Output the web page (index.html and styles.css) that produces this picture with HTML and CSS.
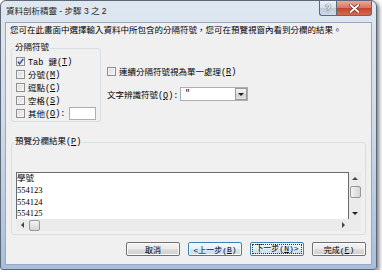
FILE: index.html
```html
<!DOCTYPE html>
<html lang="zh-Hant">
<head>
    <meta charset="UTF-8">
    <title>資料剖析精靈 - 步驟 3 之 2</title>
    <link rel="stylesheet" href="styles.css">
</head>
<body>
    <div class="window">
        <div class="titlebar">
            <span class="title">資料剖析精靈 - 步驟 3 之 2</span>
            <div class="caption">
                <span class="cbtn help">?</span>
                <span class="cbtn close">
                    <svg width="11" height="9" viewBox="0 0 11 9">
                        <path d="M1.5 1 L9.5 8 M9.5 1 L1.5 8" stroke="#6b2a1f" stroke-width="3.2" stroke-linecap="round"/>
                        <path d="M1.5 1 L9.5 8 M9.5 1 L1.5 8" stroke="#fff" stroke-width="1.8" stroke-linecap="round"/>
                    </svg>
                </span>
            </div>
        </div>

        <div class="client">
            <p class="intro">您可在此畫面中選擇輸入資料中所包含的分隔符號，您可在預覽視窗內看到分欄的結果。</p>

            <div class="options">
                <!-- 分隔符號 -->
                <fieldset class="group delims">
                    <legend>分隔符號</legend>
                    <label class="check">
                        <span class="box">
                            <svg width="7" height="7" viewBox="0 0 7 7"><path d="M0.8 3.8 L2.6 5.8 L6.3 0.8" fill="none" stroke="#2c4fa0" stroke-width="1.4"/></svg>
                        </span>Tab 鍵(<u>T</u>)
                    </label>
                    <label class="check"><span class="box"></span>分號(<u>M</u>)</label>
                    <label class="check"><span class="box"></span>逗點(<u>C</u>)</label>
                    <label class="check"><span class="box"></span>空格(<u>S</u>)</label>
                    <label class="check"><span class="box"></span>其他(<u>O</u>):<span class="textbox"></span></label>
                </fieldset>

                <div class="side">
                    <label class="check"><span class="box"></span>連續分隔符號視為單一處理(<u>R</u>)</label>
                    <div class="qualifier">
                        <span class="lbl">文字辨識符號(<u>Q</u>):</span>
                        <div class="select">
                            <span class="value">"</span>
                            <span class="drop"><i class="tri down"></i></span>
                        </div>
                    </div>
                </div>
            </div>

            <!-- 預覽 -->
            <fieldset class="group preview">
                <legend>預覽分欄結果(<u>P</u>)</legend>
                <div class="previewbox">
                    <div class="data">學號<br>554123<br>554124<br>554125</div>
                    <div class="vscroll">
                        <span class="sbtn"><i class="tri up"></i></span>
                        <span class="thumb v"></span>
                        <span class="sbtn end"><i class="tri down"></i></span>
                    </div>
                    <div class="hscroll">
                        <span class="sbtn"><i class="tri left"></i></span>
                        <span class="thumb h"></span>
                        <span class="sbtn end"><i class="tri right"></i></span>
                    </div>
                    <div class="corner"></div>
                </div>
            </fieldset>

            <div class="buttons">
                <span class="btn">取消</span>
                <span class="btn default">&lt;上一步(<u>B</u>)</span>
                <span class="btn default focus"><span class="focusrect">下一步(<u>N</u>)&gt;</span></span>
                <span class="btn">完成(<u>F</u>)</span>
            </div>
        </div>
    </div>
</body>
</html>
```

FILE: styles.css
```css
* {
    box-sizing: border-box;
}
body {
    margin: 0;
    background: #fff;
    font-family: "Liberation Mono", "Noto Sans CJK TC", monospace;
    font-size: 8.5px;
    color: #000;
}
u {
    text-underline-offset: 1px;
}
.window {
    width: 377px;
    height: 270px;
    border: 1px solid #5d6878;
    border-radius: 6px 6px 3px 3px;
    padding: 0 4px 4px;
    background: linear-gradient(#dfe7f0, #cfdbe9 45%, #a8bfdc);
    box-shadow: 2px 2px 4px rgba(0,0,0,0.55);
}
.titlebar {
    height: 21px;
    display: flex;
    justify-content: space-between;
    align-items: flex-start;
}
.title {
    font-family: "Liberation Sans", "Noto Sans CJK TC", sans-serif;
    line-height: 21px;
    padding-left: 1px;
    color: #1b1b1b;
}
.caption {
    display: flex;
}
.cbtn {
    height: 15px;
    border: 1px solid #5c6a7e;
    border-top: none;
    display: flex;
    align-items: center;
    justify-content: center;
}
.help {
    width: 17px;
    border-right: none;
    border-radius: 0 0 0 3px;
    background: linear-gradient(#eef2f7, #d5deea 50%, #bccbdd 51%, #cfdbe9);
    font-family: "Liberation Sans", sans-serif;
    font-size: 10px;
    font-weight: bold;
    color: #f4f6f9;
    text-shadow: 0 0 1px #4a5566, 0 0 1px #4a5566;
}
.close {
    width: 36px;
    border-radius: 0 0 3px 0;
    background: linear-gradient(#e9a99b, #d7735f 50%, #c2452d 51%, #d66a4e);
}
.client {
    height: 243px;
    border: 1px solid #98a9bf;
    background: #f0f0f0;
    padding: 3px 5px 0;
}
.intro {
    margin: 0 0 0 -1px;
    line-height: 10px;
    white-space: nowrap;
}
.options {
    display: flex;
    gap: 6px;
    margin-top: 7px;
}
.group {
    margin: 0;
    min-width: 0;
    border: 1px solid #d5dfe5;
    border-radius: 3px;
    padding: 2px 0 1px 2px;
}
.group legend {
    padding: 0 1px;
    line-height: 10px;
}
.delims {
    width: 90px;
}
.check {
    display: flex;
    align-items: center;
    height: 13px;
    padding-left: 2px;
    white-space: nowrap;
}
.box {
    width: 9px;
    height: 9px;
    margin-right: 3px;
    border: 1px solid #8e8f8f;
    background: linear-gradient(135deg, #d9d9d9, #f7f7f7);
    box-shadow: inset 0 0 0 1px #f3f3f3;
    display: flex;
    align-items: center;
    justify-content: center;
    flex-shrink: 0;
}
.textbox {
    width: 27px;
    height: 13px;
    margin-left: 4px;
    border: 1px solid #abadb3;
    background: #fff;
}
.side {
    padding-top: 22px;
}
.side .check {
    padding-left: 0;
}
.qualifier {
    display: flex;
    align-items: center;
    margin-top: 9px;
}
.qualifier .lbl {
    width: 73px;
}
.select {
    width: 68px;
    height: 14px;
    border: 1px solid #abadb3;
    background: #fff;
    display: flex;
}
.select .value {
    flex: 1;
    padding-left: 4px;
    line-height: 12px;
}
.drop {
    width: 12px;
    border: 1px solid #9a9a9a;
    background: linear-gradient(#f4f4f4, #e2e2e2 50%, #d2d2d2 51%, #e0e0e0);
    display: flex;
    align-items: center;
    justify-content: center;
}
.tri {
    width: 0;
    height: 0;
    border: 3px solid transparent;
}
.tri.down {
    border-top: 3px solid #222;
    border-bottom-width: 0;
}
.tri.up {
    border-bottom: 3px solid #444;
    border-top-width: 0;
}
.tri.left {
    border-right: 3px solid #444;
    border-left-width: 0;
}
.tri.right {
    border-left: 3px solid #444;
    border-right-width: 0;
}
.preview {
    margin-top: 15px;
    padding: 25px 4px 3px 2px;
}
.previewbox {
    height: 59px;
    margin-left: 2px;
    display: grid;
    grid-template-columns: 1fr 12px;
    grid-template-rows: 1fr 12px;
}
.data {
    border: 1px solid #6b6b6b;
    border-bottom: none;
    background: #fff;
    font-family: "Liberation Serif", "Noto Sans CJK TC", serif;
    line-height: 11.8px;
    overflow: hidden;
}
.vscroll, .hscroll, .corner {
    background: #ebebeb;
}
.vscroll {
    display: flex;
    flex-direction: column;
    align-items: center;
}
.hscroll {
    display: flex;
    align-items: center;
}
.sbtn {
    width: 12px;
    height: 12px;
    display: flex;
    align-items: center;
    justify-content: center;
    flex-shrink: 0;
}
.sbtn.end {
    margin: auto 0 0 auto;
}
.hscroll .sbtn.end {
    margin: 0 0 0 auto;
}
.thumb {
    border: 1px solid #989898;
    border-radius: 2px;
}
.thumb.v {
    width: 11px;
    height: 12px;
    margin-top: 2px;
    background: linear-gradient(90deg, #f4f4f4, #e4e4e4 50%, #d6d6d6);
}
.thumb.h {
    width: 11px;
    height: 11px;
    margin-left: 1px;
    background: linear-gradient(#f4f4f4, #e4e4e4 50%, #d6d6d6);
}
.buttons {
    display: flex;
    justify-content: flex-end;
    gap: 8px;
    margin-top: 7px;
}
.btn {
    width: 54px;
    height: 14px;
    border: 1px solid #707070;
    border-radius: 2px;
    background: linear-gradient(#f4f4f4, #ebebeb 50%, #dddddd 51%, #cfcfcf);
    box-shadow: inset 0 0 0 1px #fcfcfc;
    font-size: 8px;
    display: flex;
    align-items: center;
    justify-content: center;
    white-space: nowrap;
}
.btn.default {
    border-color: #3c7fb1;
    background: linear-gradient(#f2f8fc, #e6f1f9 50%, #d2e6f4 51%, #c6def0);
}
.focusrect {
    border: 1px dotted #333;
    padding: 0 2px;
    line-height: 8px;
}
```
